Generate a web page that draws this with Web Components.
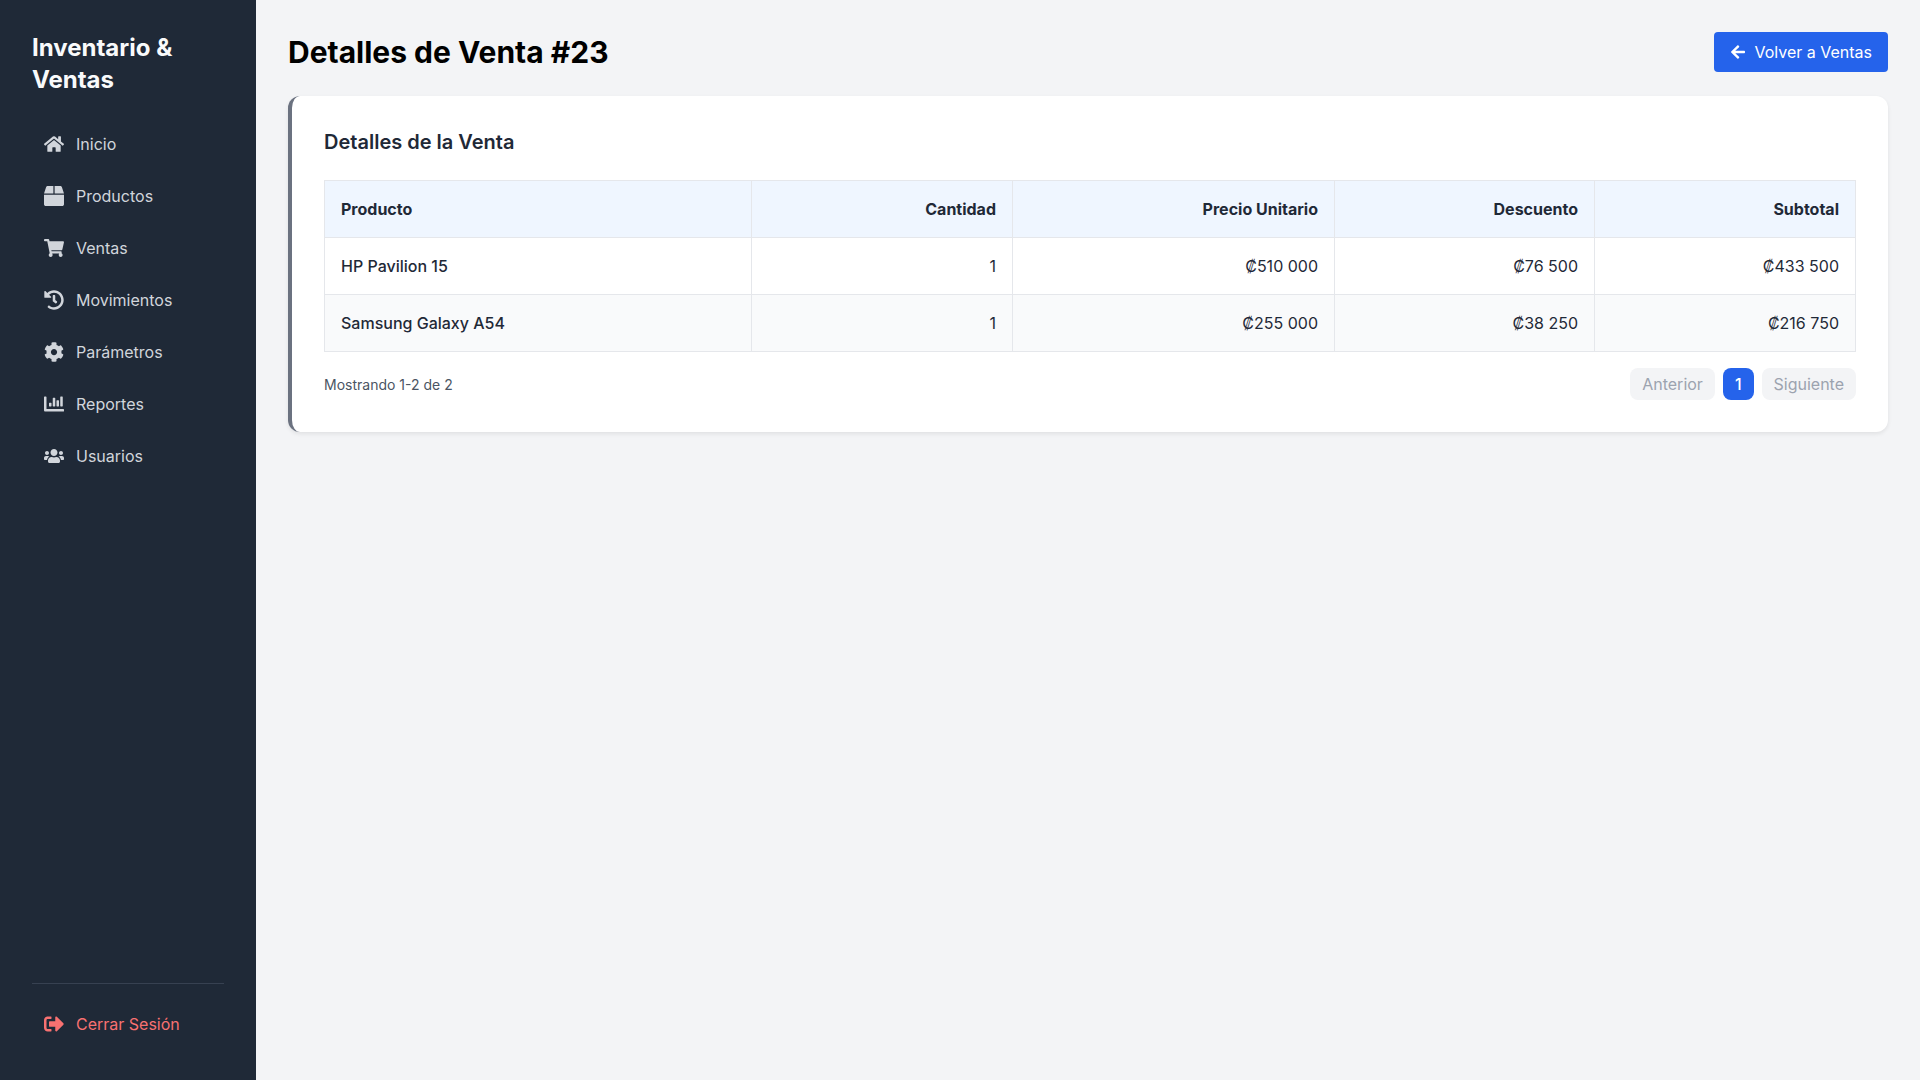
<!DOCTYPE html>
<html lang="es">
<head>
<meta charset="utf-8">
<title>Detalles de Venta #23</title>
<style>
	html, body { margin: 0; height: 100%; }
	body { font-family: Inter, "Noto Sans", sans-serif; background: #f3f4f6; color: #1f2937; }
</style>
</head>
<body>

<app-shell>
	<side-bar slot="side" heading="Inventario &amp; Ventas">
		<nav-item icon="home">Inicio</nav-item>
		<nav-item icon="box">Productos</nav-item>
		<nav-item icon="cart">Ventas</nav-item>
		<nav-item icon="history">Movimientos</nav-item>
		<nav-item icon="cog">Parámetros</nav-item>
		<nav-item icon="chart">Reportes</nav-item>
		<nav-item icon="users">Usuarios</nav-item>
		<nav-item slot="foot" icon="signout" danger>Cerrar Sesión</nav-item>
	</side-bar>
	<page-header heading="Detalles de Venta #23" action="Volver a Ventas"></page-header>
	<sale-card heading="Detalles de la Venta">
		<sale-table></sale-table>
		<table-foot slot="foot" summary="Mostrando 1-2 de 2"></table-foot>
	</sale-card>
</app-shell>

<script>
const ICONS = {
	home: ['0 0 576 512', 'M280.37 148.26L96 300.11V464a16 16 0 0 0 16 16l112.06-.29a16 16 0 0 0 15.92-16V368a16 16 0 0 1 16-16h64a16 16 0 0 1 16 16v95.64a16 16 0 0 0 16 16.05L464 480a16 16 0 0 0 16-16V300L295.67 148.26a12.19 12.19 0 0 0-15.3 0zM571.6 251.47L488 182.56V44.05a12 12 0 0 0-12-12h-56a12 12 0 0 0-12 12v72.61L318.47 43a48 48 0 0 0-61 0L4.34 251.47a12 12 0 0 0-1.6 16.9l25.5 31A12 12 0 0 0 45.15 301l235.22-193.74a12.19 12.19 0 0 1 15.3 0L530.9 301a12 12 0 0 0 16.9-1.6l25.5-31a12 12 0 0 0-1.7-16.93z'],
	box: ['0 0 512 512', 'M509.5 184.6L458.9 32.8C452.4 13.2 434.1 0 413.4 0H272v192h238.7c-.4-2.5-.4-5-1.2-7.4zM240 0H98.6c-20.7 0-39 13.2-45.5 32.8L2.5 184.6c-.8 2.4-.8 4.9-1.2 7.4H240V0zM0 224v240c0 26.5 21.5 48 48 48h416c26.5 0 48-21.5 48-48V224H0z'],
	cart: ['0 0 576 512', 'M528.12 301.319l47.273-208C578.806 78.301 567.391 64 551.99 64H159.208l-9.166-44.81C147.758 8.021 137.93 0 126.529 0H24C10.745 0 0 10.745 0 24v16c0 13.255 10.745 24 24 24h69.883l70.248 343.435C147.325 417.1 136 435.222 136 456c0 30.928 25.072 56 56 56s56-25.072 56-56c0-15.674-6.447-29.835-16.824-40h209.647C430.447 426.165 424 440.326 424 456c0 30.928 25.072 56 56 56s56-25.072 56-56c0-22.172-12.888-41.332-31.579-50.405l5.517-24.276c3.413-15.018-8.002-29.319-23.403-29.319H218.117l-6.545-32h293.145c11.206 0 20.92-7.754 23.403-18.681z'],
	history: ['0 0 512 512', 'M504 255.531c.253 136.64-111.18 248.372-247.82 248.468-59.015.042-113.223-20.53-155.822-54.911-11.077-8.94-11.905-25.541-1.839-35.607l11.267-11.267c8.609-8.609 22.353-9.551 31.891-1.984C173.062 425.135 212.781 440 256 440c101.705 0 184-82.311 184-184 0-101.705-82.311-184-184-184-48.814 0-93.149 18.969-126.068 49.932l50.754 50.754c10.08 10.08 2.941 27.314-11.313 27.314H24c-8.837 0-16-7.163-16-16V38.627c0-14.254 17.234-21.393 27.314-11.314l49.372 49.372C129.209 34.136 189.552 8 256 8c136.81 0 247.747 110.78 248 247.531zm-180.912 78.784l9.823-12.63c8.138-10.463 6.253-25.542-4.21-33.679L288 256.349V152c0-13.255-10.745-24-24-24h-16c-13.255 0-24 10.745-24 24v135.651l65.409 50.874c10.463 8.137 25.541 6.253 33.679-4.21z'],
	cog: ['0 0 512 512', 'M487.4 315.7l-42.6-24.6c4.3-23.2 4.3-47 0-70.2l42.6-24.6c4.9-2.8 7.1-8.6 5.5-14-11.1-35.6-30-67.8-54.7-94.6-3.8-4.1-10-5.1-14.8-2.3L380.8 110c-17.9-15.4-38.5-27.3-60.8-35.1V25.8c0-5.6-3.9-10.5-9.4-11.7-36.7-8.2-74.3-7.8-109.2 0-5.5 1.2-9.4 6.1-9.4 11.7V75c-22.2 7.9-42.8 19.8-60.8 35.1L88.7 85.5c-4.9-2.8-11-1.9-14.8 2.3-24.7 26.7-43.6 58.9-54.7 94.6-1.7 5.4.6 11.2 5.5 14L67.3 221c-4.3 23.2-4.3 47 0 70.2l-42.6 24.6c-4.9 2.8-7.1 8.6-5.5 14 11.1 35.6 30 67.8 54.7 94.6 3.8 4.1 10 5.1 14.8 2.3l42.6-24.6c17.9 15.4 38.5 27.3 60.8 35.1v49.2c0 5.6 3.9 10.5 9.4 11.7 36.7 8.2 74.3 7.8 109.2 0 5.5-1.2 9.4-6.1 9.4-11.7v-49.2c22.2-7.9 42.8-19.8 60.8-35.1l42.6 24.6c4.9 2.8 11 1.9 14.8-2.3 24.7-26.7 43.6-58.9 54.7-94.6 1.5-5.5-.7-11.3-5.6-14.1zM256 336c-44.1 0-80-35.9-80-80s35.9-80 80-80 80 35.9 80 80-35.9 80-80 80z'],
	chart: ['0 0 512 512', 'M332.8 320h38.4c6.4 0 12.8-6.4 12.8-12.8V172.8c0-6.4-6.4-12.8-12.8-12.8h-38.4c-6.4 0-12.8 6.4-12.8 12.8v134.4c0 6.4 6.4 12.8 12.8 12.8zm96 0h38.4c6.4 0 12.8-6.4 12.8-12.8V76.8c0-6.4-6.4-12.8-12.8-12.8h-38.4c-6.4 0-12.8 6.4-12.8 12.8v230.4c0 6.4 6.4 12.8 12.8 12.8zm-288 0h38.4c6.4 0 12.8-6.4 12.8-12.8v-70.4c0-6.4-6.4-12.8-12.8-12.8h-38.4c-6.4 0-12.8 6.4-12.8 12.8v70.4c0 6.4 6.4 12.8 12.8 12.8zm96 0h38.4c6.4 0 12.8-6.4 12.8-12.8V108.8c0-6.4-6.4-12.8-12.8-12.8h-38.4c-6.4 0-12.8 6.4-12.8 12.8v198.4c0 6.4 6.4 12.8 12.8 12.8zM496 384H64V80c0-8.84-7.16-16-16-16H16C7.16 64 0 71.16 0 80v336c0 17.67 14.33 32 32 32h464c8.84 0 16-7.16 16-16v-32c0-8.84-7.16-16-16-16z'],
	users: ['0 0 640 512', 'M96 224c35.3 0 64-28.7 64-64s-28.7-64-64-64-64 28.7-64 64 28.7 64 64 64zm448 0c35.3 0 64-28.7 64-64s-28.7-64-64-64-64 28.7-64 64 28.7 64 64 64zm32 32h-64c-17.6 0-33.5 7.1-45.1 18.6 40.3 22.1 68.9 62 75.1 109.4h66c17.7 0 32-14.3 32-32v-32c0-35.3-28.7-64-64-64zm-256 0c61.9 0 112-50.1 112-112S381.9 32 320 32 208 82.1 208 144s50.1 112 112 112zm76.8 32h-8.3c-20.8 10-43.9 16-68.5 16s-47.6-6-68.5-16h-8.3C179.6 288 128 339.6 128 403.2V432c0 26.5 21.5 48 48 48h288c26.5 0 48-21.5 48-48v-28.8c0-63.6-51.6-115.2-115.2-115.2zm-223.7-13.4C161.5 263.1 145.6 256 128 256H64c-35.3 0-64 28.7-64 64v32c0 17.7 14.3 32 32 32h65.9c6.3-47.4 34.9-87.3 75.2-109.4z'],
	signout: ['0 0 512 512', 'M497 273L329 441c-15 15-41 4.5-41-17v-96H152c-13.3 0-24-10.7-24-24v-96c0-13.3 10.7-24 24-24h136V88c0-21.4 25.9-32 41-17l168 168c9.3 9.4 9.3 24.6 0 34zM192 436v-40c0-6.6-5.4-12-12-12H96c-17.7 0-32-14.3-32-32V160c0-17.7 14.3-32 32-32h84c6.6 0 12-5.4 12-12V76c0-6.6-5.4-12-12-12H96c-53 0-96 43-96 96v192c0 53 43 96 96 96h84c6.6 0 12-5.4 12-12z'],
	back: ['0 0 448 512', 'M257.5 445.1l-22.2 22.2c-9.4 9.4-24.6 9.4-33.9 0L7 273c-9.4-9.4-9.4-24.6 0-33.9L201.4 44.7c9.4-9.4 24.6-9.4 33.9 0l22.2 22.2c9.5 9.5 9.3 25-.4 34.3L136.6 216H424c13.3 0 24 10.7 24 24v32c0 13.3-10.7 24-24 24H136.6l120.5 114.8c9.8 9.3 10 24.8.4 34.3z']
};

const iconSvg = (name, size) => {
	const [box, d] = ICONS[name];
	return `<svg width="${size}" height="${size}" viewBox="${box}" fill="currentColor" aria-hidden="true"><path d="${d}"/></svg>`;
};

class AppShell extends HTMLElement {
	constructor() {
		super();
		this.attachShadow({ mode: 'open' });
		this.shadowRoot.innerHTML = `
			<style>
				:host { display: flex; min-height: 100vh; }
				main { flex: 1; min-width: 0; padding: 32px; }
			</style>
			<slot name="side"></slot>
			<main><slot></slot></main>
		`;
	}
}

class SideBar extends HTMLElement {
	constructor() {
		super();
		this.attachShadow({ mode: 'open' });
		this.shadowRoot.innerHTML = `
			<style>
				:host { display: flex; flex-direction: column; box-sizing: border-box; width: 256px; flex: none; padding: 32px; background: #1f2937; }
				h1 { margin: 0 0 26px; font-size: 24px; line-height: 32px; font-weight: 700; color: #f9fafb; }
				nav { flex: 1; display: flex; flex-direction: column; gap: 8px; }
				footer { border-top: 1px solid #374151; padding: 18px 0 2px; }
			</style>
			<h1></h1>
			<nav><slot></slot></nav>
			<footer><slot name="foot"></slot></footer>
		`;
		this.shadowRoot.querySelector('h1').textContent = this.getAttribute('heading');
	}
}

class NavItem extends HTMLElement {
	constructor() {
		super();
		this.attachShadow({ mode: 'open' });
		this.shadowRoot.innerHTML = `
			<style>
				:host { display: flex; align-items: center; gap: 12px; height: 44px; padding: 0 12px; font-size: 16px; font-weight: 400; color: #d1d5db; border-radius: 8px; }
				:host([danger]) { color: #f87171; }
				svg { flex: none; display: block; }
			</style>
			${iconSvg(this.getAttribute('icon'), 20)}
			<span><slot></slot></span>
		`;
	}
}

class PageHeader extends HTMLElement {
	constructor() {
		super();
		this.attachShadow({ mode: 'open' });
		this.shadowRoot.innerHTML = `
			<style>
				:host { display: flex; align-items: center; justify-content: space-between; margin-bottom: 24px; }
				h2 { margin: 0; font-size: 30px; line-height: 40px; font-weight: 700; color: #000; }
				a { display: flex; align-items: center; gap: 8px; height: 40px; box-sizing: border-box; padding: 0 16px; background: #2563eb; color: #fff; font-size: 16px; font-weight: 400; border-radius: 4px; }
				svg { display: block; }
			</style>
			<h2>${this.getAttribute('heading')}</h2>
			<a>${iconSvg('back', 16)}<span>${this.getAttribute('action')}</span></a>
		`;
	}
}

class SaleCard extends HTMLElement {
	constructor() {
		super();
		this.attachShadow({ mode: 'open' });
		this.shadowRoot.innerHTML = `
			<style>
				:host { display: block; padding: 32px; background: #fff; border-left: 4px solid #6b7280; border-radius: 12px; box-shadow: 0 2px 4px rgba(0,0,0,.08); }
				h3 { margin: 0 0 24px; font-size: 20px; line-height: 28px; font-weight: 600; color: #1f2937; }
			</style>
			<h3>${this.getAttribute('heading')}</h3>
			<slot></slot>
			<slot name="foot"></slot>
		`;
	}
}

class SaleTable extends HTMLElement {
	constructor() {
		super();
		const rows = [
			['HP Pavilion 15', '1', '₡510 000', '₡76 500', '₡433 500'],
			['Samsung Galaxy A54', '1', '₡255 000', '₡38 250', '₡216 750']
		];
		const heads = ['Producto', 'Cantidad', 'Precio Unitario', 'Descuento', 'Subtotal'];
		const widths = [427, 261, 322, 260, 261];
		this.attachShadow({ mode: 'open' });
		this.shadowRoot.innerHTML = `
			<style>
				:host { display: block; }
				table { width: 1531px; table-layout: fixed; border-collapse: collapse; font-size: 16px; line-height: 24px; }
				th, td { padding: 11px 16px; height: 34px; border: 1px solid #e5e7eb; text-align: right; color: #1f2937; }
				th { background: #eff6ff; font-weight: 700; }
				th:first-child, td:first-child { text-align: left; }
				td:first-child { font-weight: 500; }
				tbody tr:nth-child(even) td { background: #f9fafb; }
			</style>
			<table>
				<colgroup>${widths.map(w => `<col style="width:${w}px">`).join('')}</colgroup>
				<thead><tr>${heads.map(h => `<th>${h}</th>`).join('')}</tr></thead>
				<tbody>${rows.map(r => `<tr>${r.map(c => `<td>${c}</td>`).join('')}</tr>`).join('')}</tbody>
			</table>
		`;
	}
}

class TableFoot extends HTMLElement {
	constructor() {
		super();
		this.attachShadow({ mode: 'open' });
		this.shadowRoot.innerHTML = `
			<style>
				:host { display: flex; align-items: center; justify-content: space-between; margin-top: 16px; }
				p { margin: 0; font-size: 14px; color: #4b5563; }
				div { display: flex; gap: 8px; }
				span { height: 32px; line-height: 32px; padding: 0 12px; border-radius: 8px; background: #f3f4f6; color: #9ca3af; font-size: 16px; }
				.on { background: #2563eb; color: #fff; font-weight: 500; }
			</style>
			<p>${this.getAttribute('summary')}</p>
			<div><span>Anterior</span><span class="on">1</span><span>Siguiente</span></div>
		`;
	}
}

customElements.define('nav-item', NavItem);
customElements.define('side-bar', SideBar);
customElements.define('page-header', PageHeader);
customElements.define('sale-table', SaleTable);
customElements.define('table-foot', TableFoot);
customElements.define('sale-card', SaleCard);
customElements.define('app-shell', AppShell);
</script>
</body>
</html>
